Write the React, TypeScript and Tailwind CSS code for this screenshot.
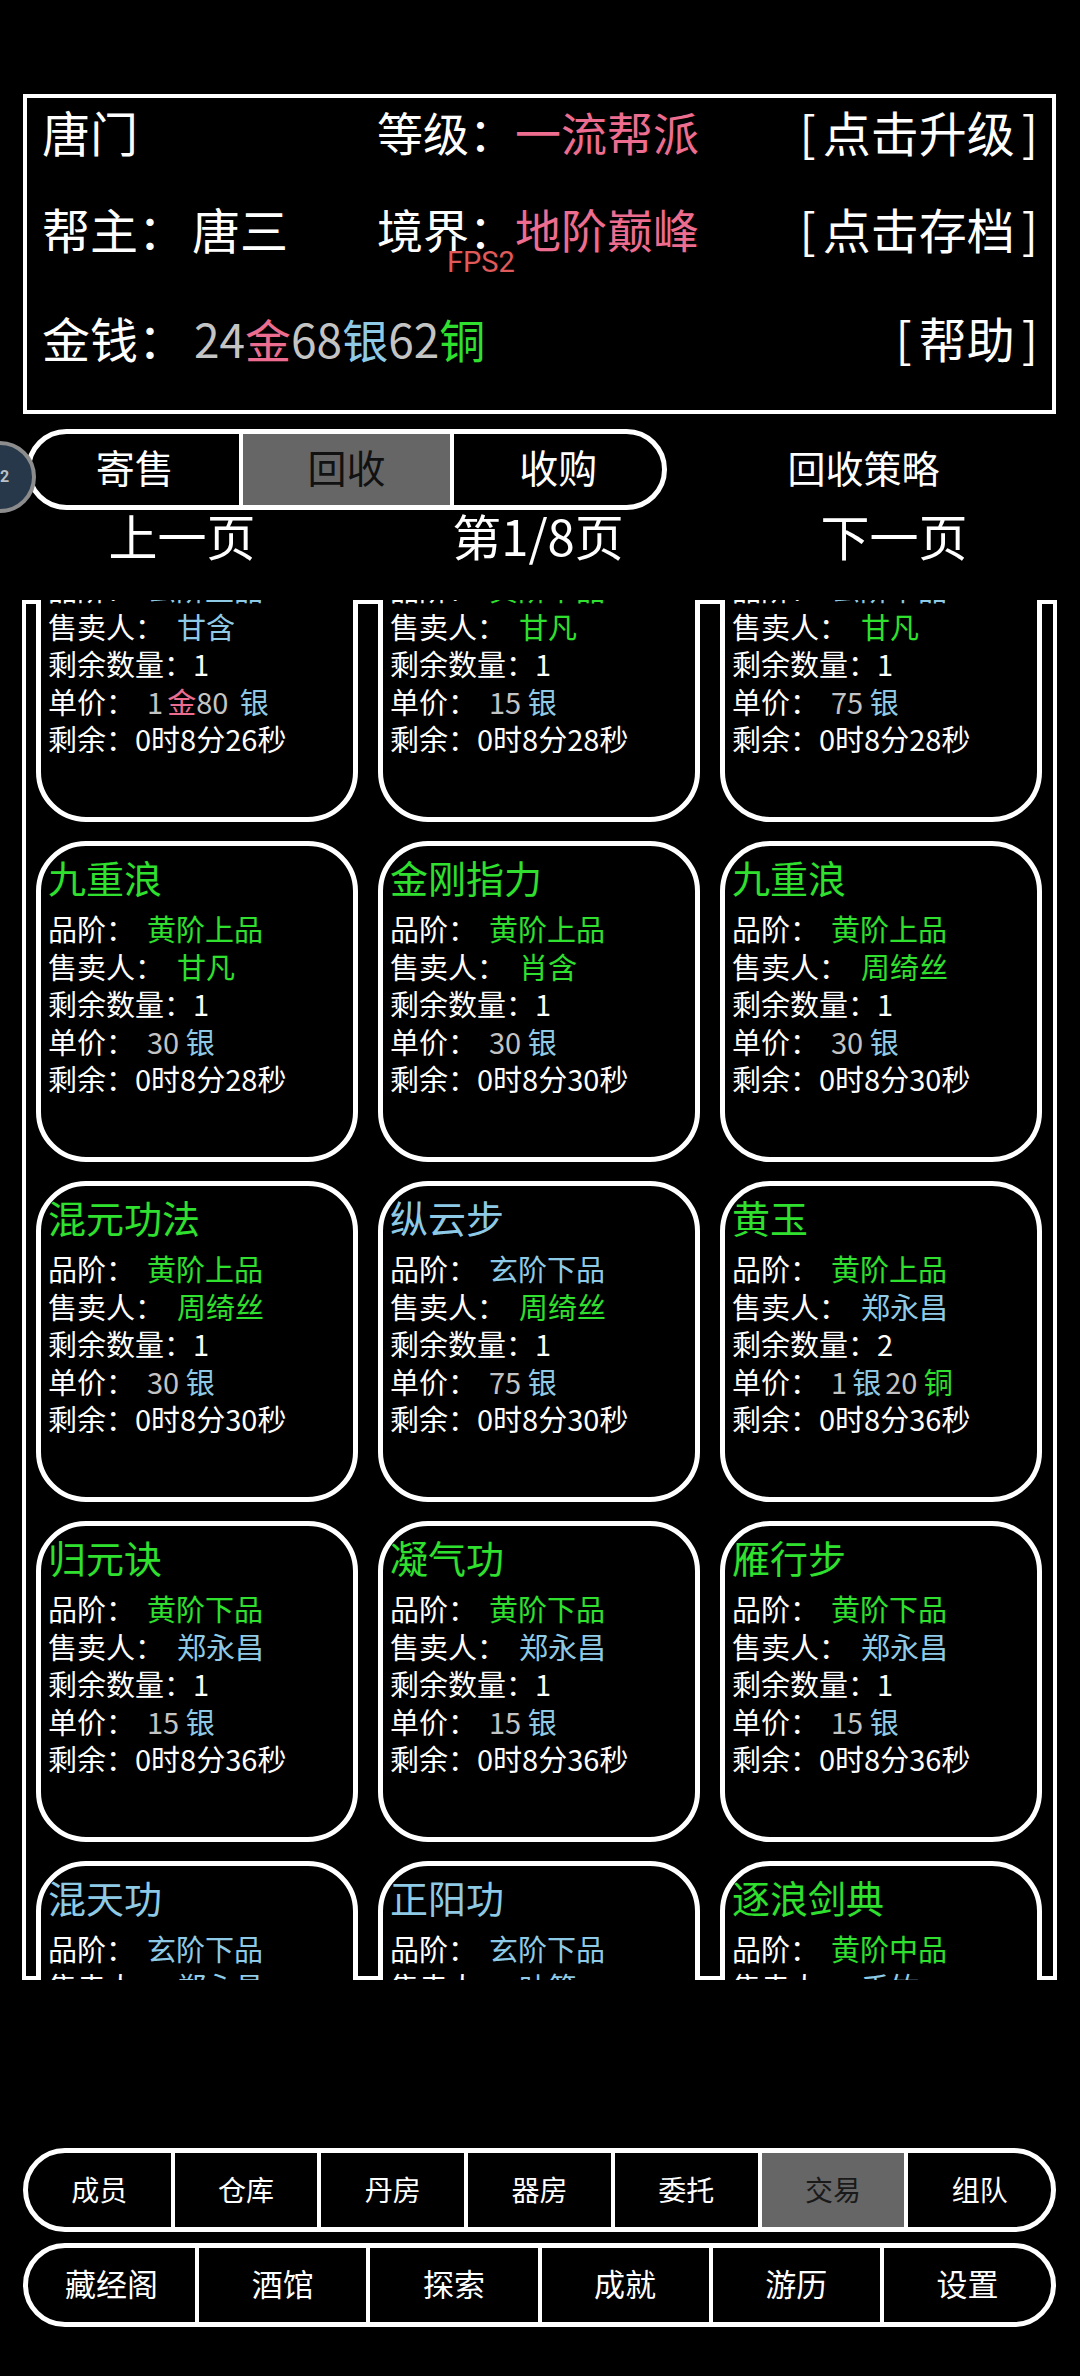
import React from "react";

const GREEN = "text-[#2fe02f]";
const BLUE = "text-[#8ecae6]";
const PINK = "text-[#ec6d8f]";
const GRAY = "text-[#c4c4c4]";

type Seg = { t: string; c: string };
type CardData = {
  title: string;
  tc: string;
  grade: string;
  gc: string;
  seller: string;
  sc: string;
  qty: string;
  price: Seg[];
  time: string;
};

const yin = (n: string): Seg[] => [
  { t: n, c: GRAY },
  { t: " 银", c: BLUE },
];

const cards: CardData[] = [
  { title: "玄铁剑法", tc: BLUE, grade: "玄阶上品", gc: BLUE, seller: "甘含", sc: BLUE, qty: "1", price: [{ t: "1", c: GRAY }, { t: "金", c: `${PINK} ml-[4px]` }, { t: "80", c: GRAY }, { t: " 银", c: `${BLUE} ml-[5px]` }], time: "0时8分26秒" },
  { title: "铁布衫", tc: GREEN, grade: "黄阶下品", gc: GREEN, seller: "甘凡", sc: GREEN, qty: "1", price: yin("15"), time: "0时8分28秒" },
  { title: "追风腿", tc: BLUE, grade: "玄阶下品", gc: BLUE, seller: "甘凡", sc: GREEN, qty: "1", price: yin("75"), time: "0时8分28秒" },
  { title: "九重浪", tc: GREEN, grade: "黄阶上品", gc: GREEN, seller: "甘凡", sc: GREEN, qty: "1", price: yin("30"), time: "0时8分28秒" },
  { title: "金刚指力", tc: GREEN, grade: "黄阶上品", gc: GREEN, seller: "肖含", sc: GREEN, qty: "1", price: yin("30"), time: "0时8分30秒" },
  { title: "九重浪", tc: GREEN, grade: "黄阶上品", gc: GREEN, seller: "周绮丝", sc: GREEN, qty: "1", price: yin("30"), time: "0时8分30秒" },
  { title: "混元功法", tc: GREEN, grade: "黄阶上品", gc: GREEN, seller: "周绮丝", sc: GREEN, qty: "1", price: yin("30"), time: "0时8分30秒" },
  { title: "纵云步", tc: BLUE, grade: "玄阶下品", gc: BLUE, seller: "周绮丝", sc: GREEN, qty: "1", price: yin("75"), time: "0时8分30秒" },
  { title: "黄玉", tc: GREEN, grade: "黄阶上品", gc: GREEN, seller: "郑永昌", sc: BLUE, qty: "2", price: [{ t: "1", c: GRAY }, { t: "银", c: `${BLUE} ml-[5px]` }, { t: "20", c: `${GRAY} ml-[4px]` }, { t: " 铜", c: GREEN }], time: "0时8分36秒" },
  { title: "归元诀", tc: GREEN, grade: "黄阶下品", gc: GREEN, seller: "郑永昌", sc: BLUE, qty: "1", price: yin("15"), time: "0时8分36秒" },
  { title: "凝气功", tc: GREEN, grade: "黄阶下品", gc: GREEN, seller: "郑永昌", sc: BLUE, qty: "1", price: yin("15"), time: "0时8分36秒" },
  { title: "雁行步", tc: GREEN, grade: "黄阶下品", gc: GREEN, seller: "郑永昌", sc: BLUE, qty: "1", price: yin("15"), time: "0时8分36秒" },
  { title: "混天功", tc: BLUE, grade: "玄阶下品", gc: BLUE, seller: "郑永昌", sc: BLUE, qty: "1", price: yin("75"), time: "0时8分40秒" },
  { title: "正阳功", tc: BLUE, grade: "玄阶下品", gc: BLUE, seller: "叶简", sc: BLUE, qty: "1", price: yin("75"), time: "0时8分40秒" },
  { title: "逐浪剑典", tc: GREEN, grade: "黄阶中品", gc: GREEN, seller: "禾竹", sc: BLUE, qty: "1", price: yin("20"), time: "0时8分40秒" },
];

function Card({ d }: { d: CardData }) {
  return (
    <div className="h-[321px] rounded-[50px] border-[5px] border-white bg-black pl-[7px] pt-[7px]">
      <div className={`text-[38px] leading-[48px] whitespace-nowrap ${d.tc}`}>{d.title}</div>
      <div className="mt-[9px] text-[29px] leading-[37.5px] text-white whitespace-pre">
        <div>
          {"品阶："}
          <span className={`ml-[12px] ${d.gc}`}>{d.grade}</span>
        </div>
        <div>
          {"售卖人："}
          <span className={`ml-[13px] ${d.sc}`}>{d.seller}</span>
        </div>
        <div>{"剩余数量：" + d.qty}</div>
        <div>
          {"单价："}
          <span className="ml-[12px]">
            {d.price.map((s, i) => (
              <span key={i} className={s.c}>
                {s.t}
              </span>
            ))}
          </span>
        </div>
        <div>{"剩余：" + d.time}</div>
      </div>
    </div>
  );
}

function Btn({ t }: { t: string }) {
  return (
    <div className="text-[48px]">
      [<span className="mx-[7px]">{t}</span>]
    </div>
  );
}

const nav1 = ["成员", "仓库", "丹房", "器房", "委托", "交易", "组队"];
const nav2 = ["藏经阁", "酒馆", "探索", "成就", "游历", "设置"];

export default function App() {
  return (
    <div className="relative min-h-[2376px] w-[1080px] overflow-hidden bg-black text-white [font-family:'Noto_Sans_CJK_SC','Noto_Sans',sans-serif]">
      <div className="h-[94px]" />
      {/* header box */}
      <div className="relative ml-[23px] w-[1033px] h-[320px] border-[4px] border-white pl-[15px] pr-[14px] text-[48px]">
        <div className="-mt-[3px] flex h-[72px] items-center">
          <div className="w-[335px]">唐门</div>
          <div className="flex-1 text-[46px]">
            等级：<span className={PINK}>一流帮派</span>
          </div>
          <Btn t="点击升级" />
        </div>
        <div className="mt-[25px] flex h-[72px] items-center">
          <div className="w-[335px]">
            帮主：<span className="ml-[6px]">唐三</span>
          </div>
          <div className="flex-1 text-[46px]">
            境界：<span className={PINK}>地阶巅峰</span>
          </div>
          <Btn t="点击存档" />
        </div>
        <div className="mt-[37px] flex h-[72px] items-center">
          <div className="flex-1">
            金钱：
            <span className="ml-[8px] text-[46px]">
              <span className={GRAY}>24</span>
              <span className={PINK}>金</span>
              <span className={GRAY}>68</span>
              <span className={BLUE}>银</span>
              <span className={GRAY}>62</span>
              <span className={GREEN}>铜</span>
            </span>
          </div>
          <Btn t="帮助" />
        </div>
        <div className="absolute left-[420px] top-[150px] text-[29px] leading-none text-[#e05a5a] [font-family:Roboto,sans-serif]">
          FPS2
        </div>
      </div>

      {/* tabs row */}
      <div className="mt-[15px] flex h-[81px] items-center">
        <div className="ml-[26px] flex h-[81px] w-[641px] overflow-hidden rounded-full border-[5px] border-white text-[39px]">
          <div className="flex flex-1 items-center justify-center pb-[6px]">寄售</div>
          <div className="flex flex-1 items-center justify-center border-x-[4px] border-white bg-[#666666] pb-[6px] text-[#111111]">回收</div>
          <div className="flex flex-1 items-center justify-center pb-[6px]">收购</div>
        </div>
        <div className="flex-1 pr-[20px] pb-[6px] text-center text-[38px]">回收策略</div>
      </div>

      {/* pagination */}
      <div className="ml-[4px] grid h-[48px] w-[1068px] grid-cols-3 items-center pb-[8px] text-center text-[49px] leading-none">
        <div>上一页</div>
        <div>第1/8页</div>
        <div>下一页</div>
      </div>

      {/* list */}
      <div className="relative mt-[42px] ml-[22px] h-[1380px] w-[1035px] overflow-hidden">
        <div className="absolute inset-0 border-[4px] border-white" />
        <div className="relative -mt-[99px] grid grid-cols-3 gap-x-[20px] gap-y-[19px] pl-[14px] pr-[15px]">
          {cards.map((c, i) => (
            <Card key={i} d={c} />
          ))}
        </div>
      </div>

      {/* bottom nav */}
      <div className="mt-[168px] ml-[23px] flex h-[84px] w-[1033px] overflow-hidden rounded-full border-[5px] border-white text-[28px]">
        {nav1.map((n, i) => (
          <div
            key={n}
            className={`flex flex-1 items-center justify-center pb-[3px] ${i > 0 ? "border-l-[4px] border-white" : ""} ${n === "交易" ? "bg-[#666666] text-[#1a1a1a]" : ""}`}
          >
            {n}
          </div>
        ))}
      </div>
      <div className="mt-[11px] ml-[23px] flex h-[84px] w-[1033px] overflow-hidden rounded-full border-[5px] border-white text-[31px]">
        {nav2.map((n, i) => (
          <div key={n} className={`flex flex-1 items-center justify-center pb-[3px] ${i > 0 ? "border-l-[4px] border-white" : ""}`}>
            {n}
          </div>
        ))}
      </div>

      {/* floating circle badge */}
      <div className="absolute left-[-36px] top-[441px] flex h-[72px] w-[72px] items-center justify-center rounded-full border-[4px] border-[#8c8c8c] bg-[#27384a] text-[16px] font-bold text-[#b8c0c8] [font-family:Roboto,sans-serif]">
        22
      </div>
    </div>
  );
}
